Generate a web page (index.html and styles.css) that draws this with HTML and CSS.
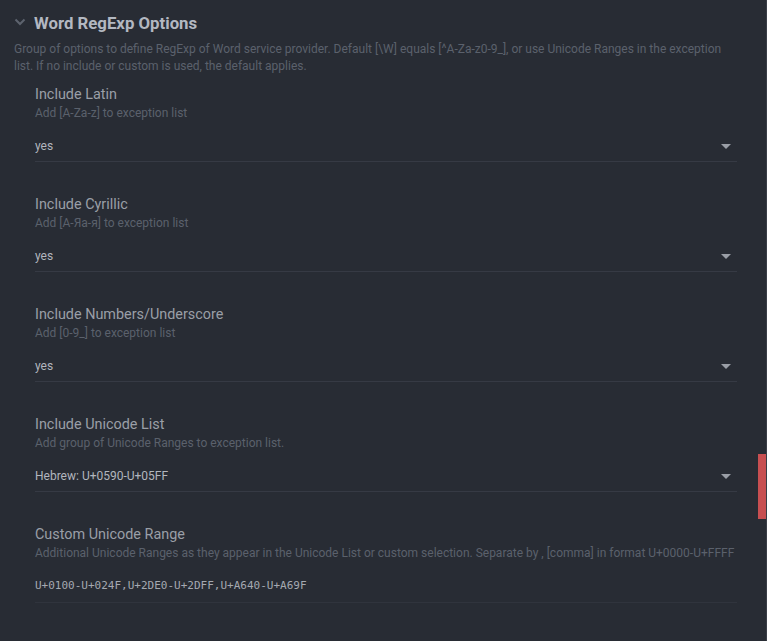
FILE: index.html
```html
<!DOCTYPE html>
<html>
<head>
<meta charset="utf-8">
<link rel="stylesheet" href="styles.css">
</head>
<body>
<div class="panel">
  <div class="header">
    <svg class="chev" width="12" height="8" viewBox="0 0 12 8"><path d="M1.5 1.5 L6 6 L10.5 1.5" fill="none" stroke="currentColor" stroke-width="2"/></svg>
    <h1 class="title">Word RegExp Options</h1>
  </div>
  <p class="desc">Group of options to define RegExp of Word service provider. Default [\W] equals [^A-Za-z0-9_], or use Unicode Ranges in the exception list. If no include or custom is used, the default applies.</p>
  <div class="fields">
    <div class="field">
      <div class="label">Include Latin</div>
      <div class="sub">Add [A-Za-z] to exception list</div>
      <div class="select"><span>yes</span><span class="arrow"></span></div>
    </div>
    <div class="field">
      <div class="label">Include Cyrillic</div>
      <div class="sub">Add [А-Яа-я] to exception list</div>
      <div class="select"><span>yes</span><span class="arrow"></span></div>
    </div>
    <div class="field">
      <div class="label">Include Numbers/Underscore</div>
      <div class="sub">Add [0-9_] to exception list</div>
      <div class="select"><span>yes</span><span class="arrow"></span></div>
    </div>
    <div class="field">
      <div class="label">Include Unicode List</div>
      <div class="sub">Add group of Unicode Ranges to exception list.</div>
      <div class="select"><span>Hebrew: U+0590-U+05FF</span><span class="arrow"></span></div>
    </div>
    <div class="field">
      <div class="label">Custom Unicode Range</div>
      <div class="sub">Additional Unicode Ranges as they appear in the Unicode List or custom selection. Separate by , [comma] in format U+0000-U+FFFF</div>
      <div class="input">U+0100-U+024F,U+2DE0-U+2DFF,U+A640-U+A69F</div>
    </div>
  </div>
</div>
<div class="scroll-track"></div>
<div class="scroll-thumb"></div>
</body>
</html>
```

FILE: styles.css
```css
html, body {
  margin: 0;
  padding: 0;
  background: #282c34;
  height: 100%;
  overflow: hidden;
}
body {
  font-family: Roboto, "Liberation Sans", sans-serif;
}
.panel {
  padding: 13px 30px 0 14px;
}
.header {
  display: flex;
  align-items: center;
  gap: 8px;
  height: 20px;
}
.chev {
  color: #5d636e;
  margin-top: -3px;
}
.title {
  margin: 0;
  font-size: 16.8px;
  font-weight: 700;
  color: #b3b8c1;
  line-height: 20px;
}
.desc {
  margin: 8px 0 0 0;
  font-size: 12px;
  line-height: 17px;
  color: #5b616c;
}
.fields {
  margin-left: 21px;
  margin-top: 11px;
}
.field {
  margin-bottom: 34px;
}
.label {
  font-size: 14.4px;
  line-height: 18px;
  color: #9a9fa7;
}
.sub {
  font-size: 12px;
  line-height: 16px;
  color: #5b616c;
  margin-top: 1px;
}
.select, .input {
  margin-top: 17px;
  font-size: 12px;
  line-height: 16px;
  color: #b2b6be;
  padding-bottom: 7px;
  border-bottom: 1px solid #363a44;
  display: flex;
  justify-content: space-between;
  align-items: center;
}
.input {
  font-family: "DejaVu Sans Mono", monospace;
  font-size: 11px;
  color: #a5a9b1;
  margin-top: 17px;
  padding-bottom: 8px;
  border-bottom-color: #30343d;
}
.arrow {
  width: 0;
  height: 0;
  border-left: 5px solid transparent;
  border-right: 5px solid transparent;
  border-top: 5px solid #9a9ea6;
  margin-right: 6px;
}
.scroll-track {
  position: fixed;
  top: 0;
  right: 0;
  width: 1px;
  height: 100%;
  background: #3a3e47;
}
.scroll-thumb {
  position: fixed;
  right: 1px;
  top: 454px;
  width: 8px;
  height: 65px;
  background: #c84f51;
}
```
